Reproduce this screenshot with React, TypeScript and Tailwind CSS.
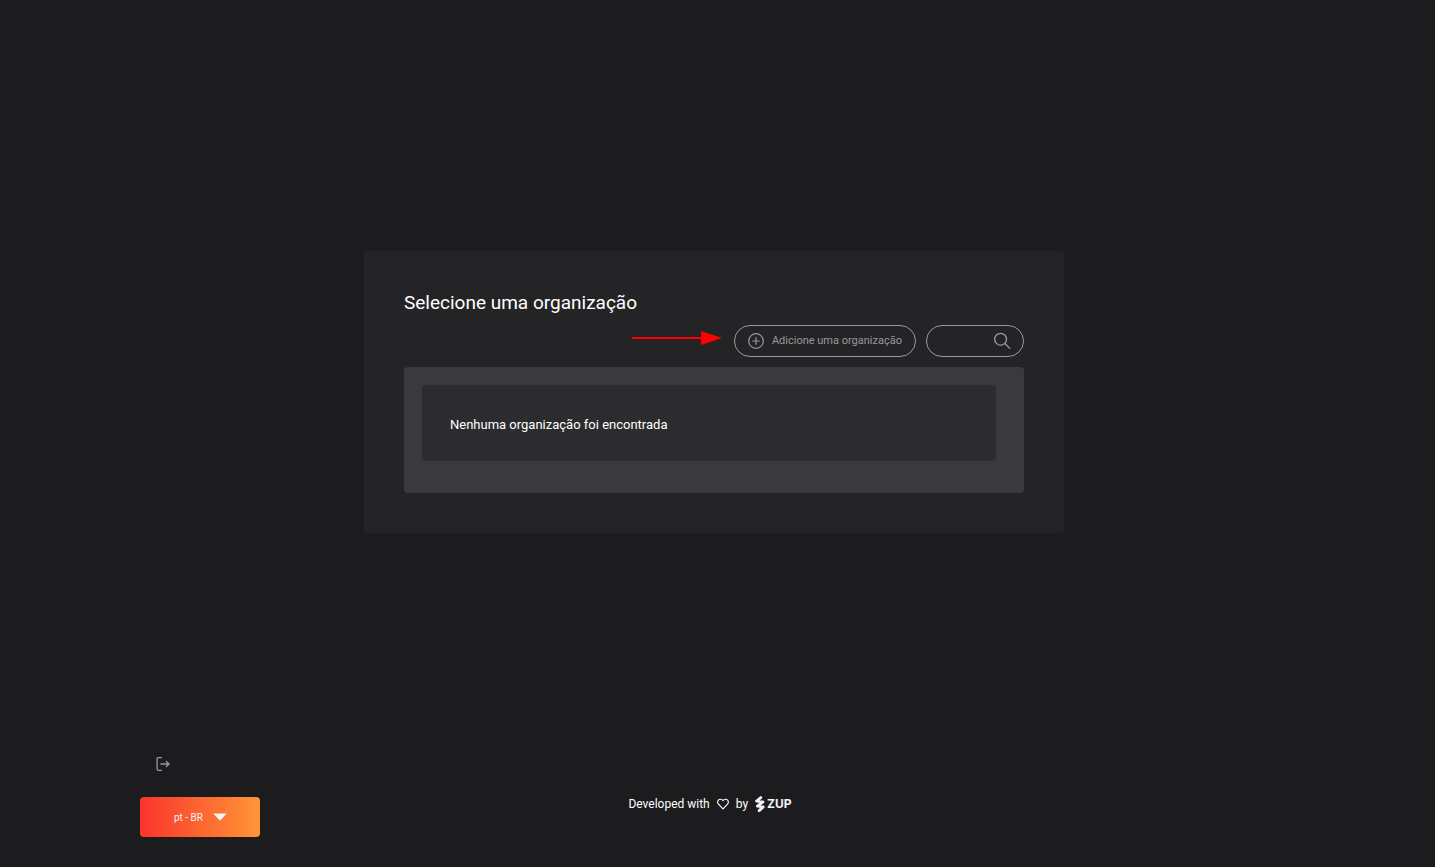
import { useState } from "react";

function PlusCircleIcon() {
  return (
    <svg width="16" height="16" viewBox="0 0 16 16" fill="none" stroke="currentColor" strokeWidth="1.2" strokeLinecap="round" aria-hidden="true">
      <circle cx="8" cy="8" r="7.3" />
      <path d="M8 4.7v6.6M4.7 8h6.6" />
    </svg>
  );
}

function SearchIcon() {
  return (
    <svg width="18" height="18" viewBox="0 0 18 18" fill="none" stroke="currentColor" strokeWidth="1.3" strokeLinecap="round" aria-hidden="true">
      <circle cx="7.6" cy="7.2" r="5.9" />
      <path d="M11.9 11.5l4.9 4.9" />
    </svg>
  );
}

function HeartIcon() {
  return (
    <svg width="12" height="12" viewBox="0 0 12 12" fill="none" stroke="currentColor" strokeWidth="1.1" strokeLinejoin="round" aria-hidden="true">
      <path d="M6 10.8L1.5 6.2C.3 5 .4 3 1.6 1.9 2.9.8 4.7 1 6 2.6 7.3 1 9.1.8 10.4 1.9 11.6 3 11.7 5 10.5 6.2Z" />
    </svg>
  );
}

function LogoutIcon() {
  return (
    <svg width="14" height="14" viewBox="0 0 14 14" fill="none" stroke="currentColor" strokeWidth="1.3" strokeLinecap="round" strokeLinejoin="round" aria-hidden="true">
      <path d="M5.5.7H2.4C1.5.7 1.1 1.2 1.1 2v10c0 .8.4 1.3 1.3 1.3h3.1" />
      <path d="M4.9 7h8.2M10.4 4.5L13.1 7l-2.7 2.5" />
    </svg>
  );
}

function ZupLogo() {
  return (
    <span className="flex items-center gap-[2px] text-[#f2f2f7]">
      <svg width="10" height="17" viewBox="0 0 10 17" fill="none" stroke="currentColor" strokeWidth="2.8" strokeLinecap="round" strokeLinejoin="round" aria-hidden="true">
        <path d="M5.8 1.6L1.6 5 8 5.9 2.4 10.1 8.3 10.9 4.1 14.6" />
      </svg>
      <span className="font-['Inter','Liberation_Sans',sans-serif] text-[12px] leading-4 font-bold">ZUP</span>
    </span>
  );
}

export default function App() {
  const [query, setQuery] = useState("");

  return (
    <div className="flex min-h-screen flex-col bg-[#1c1c1e] font-['Roboto','Liberation_Sans',sans-serif] text-white">
      <main className="flex flex-1 items-center justify-center pt-[27px] pr-[7px]">
        <section className="w-full max-w-[700px] rounded bg-[#242426] p-10">
          <h1 className="text-[19px] leading-6 font-normal">Selecione uma organização</h1>
          <div className="mt-[10px] flex items-start justify-end">
            <svg className="mt-[6px] mr-3" width="90" height="14" viewBox="0 0 90 14" fill="#ff0000" aria-hidden="true">
              <path d="M0 6h69V0l21 7-21 7V8H0Z" />
            </svg>
            <button type="button" className="flex h-8 items-center gap-2 rounded-full border border-[#98989e] px-[13px] text-[11px] text-[#98989e]">
              <PlusCircleIcon />
              Adicione uma organização
            </button>
            <label className="ml-[10px] flex h-8 w-[98px] items-center rounded-full border border-[#98989e] pr-3 pl-4 text-[#98989e]">
              <input
                type="text"
                aria-label="Buscar organização"
                value={query}
                onChange={(e) => setQuery(e.target.value)}
                className="w-full min-w-0 flex-1 bg-transparent text-[11px] text-white outline-none"
              />
              <SearchIcon />
            </label>
          </div>
          <div className="mt-[10px] rounded bg-[#3a3a3c] pt-[18px] pr-7 pb-8 pl-[18px]">
            <p className="rounded bg-[#2c2c2e] px-7 pt-[30px] pb-[26px] text-[13px] leading-5">Nenhuma organização foi encontrada</p>
          </div>
        </section>
      </main>

      <footer className="grid grid-cols-[1fr_auto_1fr] items-end px-[140px] pb-[30px]">
        <div className="flex flex-col items-start gap-[26px]">
          <button type="button" aria-label="Sair" className="ml-4 text-[#98989e]">
            <LogoutIcon />
          </button>
          <label className="relative flex w-[120px] items-center rounded bg-linear-to-r/srgb from-[#f9352b] to-[#ff9636]">
            <select aria-label="Idioma" className="h-10 w-full appearance-none bg-transparent pl-[34px] text-[10px] text-[#f2f2f7] outline-none">
              <option>pt - BR</option>
            </select>
            <svg className="pointer-events-none absolute right-[33px]" width="14" height="8" viewBox="0 0 14 8" fill="#f2f2f7" aria-hidden="true">
              <path d="M.2.5h13.6L7 7.7Z" />
            </svg>
          </label>
        </div>
        <div className="mr-[15px] mb-6 flex items-center gap-[7px] text-[12px] leading-[18px]">
          <span>Developed with</span>
          <HeartIcon />
          <span>by</span>
          <ZupLogo />
        </div>
        <div />
      </footer>
    </div>
  );
}
